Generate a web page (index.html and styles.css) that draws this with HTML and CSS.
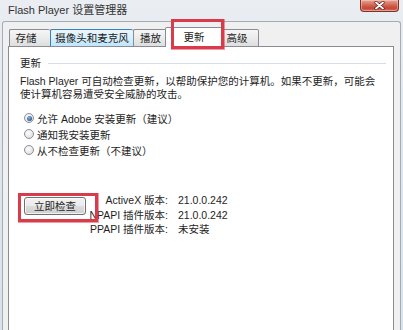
FILE: index.html
```html
<!DOCTYPE html>
<html lang="zh-CN">
<head>
<meta charset="utf-8">
<title>Flash Player 设置管理器</title>
<link rel="stylesheet" href="styles.css">
</head>
<body>
<div class="window">
  <div class="titlebar">
    <span class="title">Flash Player 设置管理器</span>
    <span class="close"><svg width="11" height="9" viewBox="0 0 11 9"><path d="M2 1.5 L9 7.5 M9 1.5 L2 7.5" stroke="#5a1f18" stroke-width="3.2" stroke-linecap="round"/><path d="M2 1.5 L9 7.5 M9 1.5 L2 7.5" stroke="#ffffff" stroke-width="1.8" stroke-linecap="round"/></svg></span>
  </div>
  <div class="frame">
    <div class="tabs">
      <div class="tab tab-storage">存储</div>
      <div class="tab tab-camera hover">摄像头和麦克风</div>
      <div class="tab tab-play">播放</div>
      <div class="tab tab-update active">更新<span class="mark mark-tab"></span></div>
      <div class="tab tab-adv">高级</div>
    </div>
    <div class="panel">
      <div class="group"><span class="group-label">更新</span><span class="group-line"></span></div>
      <p class="desc">Flash Player 可自动检查更新，以帮助保护您的计算机。如果不更新，可能会<br>使计算机容易遭受安全威胁的攻击。</p>
      <div class="radios">
        <div class="radio"><span class="dot checked"></span><span>允许 Adobe 安装更新（建议）</span></div>
        <div class="radio"><span class="dot"></span><span>通知我安装更新</span></div>
        <div class="radio"><span class="dot"></span><span>从不检查更新（不建议）</span></div>
      </div>
      <div class="check">
        <div class="btn-wrap">
          <button class="btn">立即检查</button>
        </div>
        <div class="versions">
          <span class="k">ActiveX 版本:</span><span class="v">21.0.0.242</span>
          <span class="k">NPAPI 插件版本:</span><span class="v">21.0.0.242</span>
          <span class="k">PPAPI 插件版本:</span><span class="v">未安装</span>
        </div>
        <span class="mark mark-btn"></span>
      </div>
    </div>
  </div>
</div>
</body>
</html>
```

FILE: styles.css
```css
* { box-sizing: border-box; }
html, body { margin: 0; padding: 0; }
body {
  width: 403px;
  height: 330px;
  overflow: hidden;
  font-family: "Liberation Sans", "Noto Sans CJK SC", sans-serif;
  font-size: 10.5px;
  color: #1e1e1e;
}
.window {
  width: 403px;
  height: 330px;
  display: flex;
  flex-direction: column;
  background: linear-gradient(#eaeef2, #dfe6ee 40%, #d9e2eb);
}
.titlebar {
  height: 21px;
  flex: none;
  display: flex;
  justify-content: space-between;
  align-items: flex-start;
}
.title {
  padding: 4px 0 0 8px;
  font-size: 11px;
  line-height: 13px;
  color: #333;
}
.close {
  width: 39px;
  height: 12px;
  margin-right: 4px;
  border: 1px solid #7b3329;
  border-top: none;
  border-radius: 0 0 4px 4px;
  background: linear-gradient(#e7a596, #cf5a48 55%, #c44634 75%, #d77766);
  display: flex;
  align-items: center;
  justify-content: center;
  box-shadow: inset 0 0 0 1px rgba(255, 220, 210, 0.45);
}
.frame {
  flex: 1;
  margin: 0 2px;
  border: 1px solid #a4acb6;
  border-bottom: none;
  border-radius: 3px 3px 0 0;
  background: #f0f0f0;
  padding: 7px 6px 0 5px;
  display: flex;
  flex-direction: column;
}
.tabs {
  display: flex;
  height: 17px;
  flex: none;
  padding-left: 1px;
  position: relative;
  z-index: 1;
}
.tab {
  position: relative;
  height: 17px;
  border: 1px solid #898c95;
  border-bottom: none;
  border-right: none;
  border-radius: 2px 2px 0 0;
  background: linear-gradient(#f6f6f6, #ebebeb 50%, #dedede);
  text-align: center;
  line-height: 16px;
  white-space: nowrap;
}
.tab-adv { border-right: 1px solid #898c95; }
.tab-storage { width: 41px; padding-right: 8px; }
.tab-camera { width: 83px; }
.tab-play { width: 34px; }
.tab-update { width: 54px; }
.tab-adv { width: 38px; padding-right: 6px; }
.tab.hover {
  background: linear-gradient(#eaf6fd, #d9f0fc 50%, #bee6fd);
  border-color: #3c7fb1;
}
.tab.active {
  width: 58px;
  height: 20px;
  margin: -2px -2px 0;
  background: #fff;
  border-right: 1px solid #898c95;
  z-index: 2;
  line-height: 19px;
}
.tab.active + .tab { border-left-color: transparent; }
.mark {
  position: absolute;
  border: 3px solid #d83c4a;
  box-shadow: 0 0 0.5px 0.5px rgba(216, 60, 74, 0.5);
  pointer-events: none;
  z-index: 3;
}
.mark-tab {
  left: 5px;
  right: -2px;
  top: -9px;
  bottom: -2px;
}
.panel {
  flex: 1;
  background: #fff;
  border: 1px solid #898c95;
  border-bottom: none;
  padding: 9px 7px 0 11px;
}
.group {
  display: flex;
  align-items: center;
  gap: 7px;
  line-height: 14px;
}
.group-line {
  flex: 1;
  height: 1px;
  background: #d5dfe5;
}
.desc {
  margin: 5px 0 0;
  line-height: 13px;
}
.radios {
  margin-top: 9px;
  padding-left: 4px;
}
.radio {
  display: flex;
  align-items: center;
  gap: 3px;
  height: 16px;
  white-space: nowrap;
}
.dot {
  width: 10px;
  height: 10px;
  border-radius: 50%;
  border: 1px solid #8c8f94;
  background: radial-gradient(circle at 40% 35%, #fdfdfd, #e2e3e5 70%, #cfd1d4);
  display: flex;
  align-items: center;
  justify-content: center;
}
.dot.checked::after {
  content: "";
  width: 5px;
  height: 5px;
  border-radius: 50%;
  background: radial-gradient(circle at 40% 35%, #8fb2dc, #2d5e9e 70%, #1d4177);
}
.check {
  position: relative;
  margin-top: 35px;
  display: flex;
  align-items: flex-start;
}
.btn-wrap {
  margin: 4px 0 0 4px;
}
.btn {
  display: block;
  width: 62px;
  height: 18px;
  padding: 0;
  border: 1px solid #707070;
  border-radius: 3px;
  background: linear-gradient(#f2f2f2, #ebebeb 50%, #dddddd 51%, #cfcfcf);
  box-shadow: inset 0 0 0 1px rgba(255, 255, 255, 0.7);
  font-family: inherit;
  font-size: 10.5px;
  color: #1e1e1e;
  line-height: 16px;
}
.mark-btn {
  left: -2px;
  top: 0;
  width: 80px;
  height: 29px;
}
.versions {
  display: grid;
  grid-template-columns: 82px auto;
  column-gap: 10px;
  line-height: 14.5px;
  white-space: nowrap;
}
.k { text-align: right; }
```
